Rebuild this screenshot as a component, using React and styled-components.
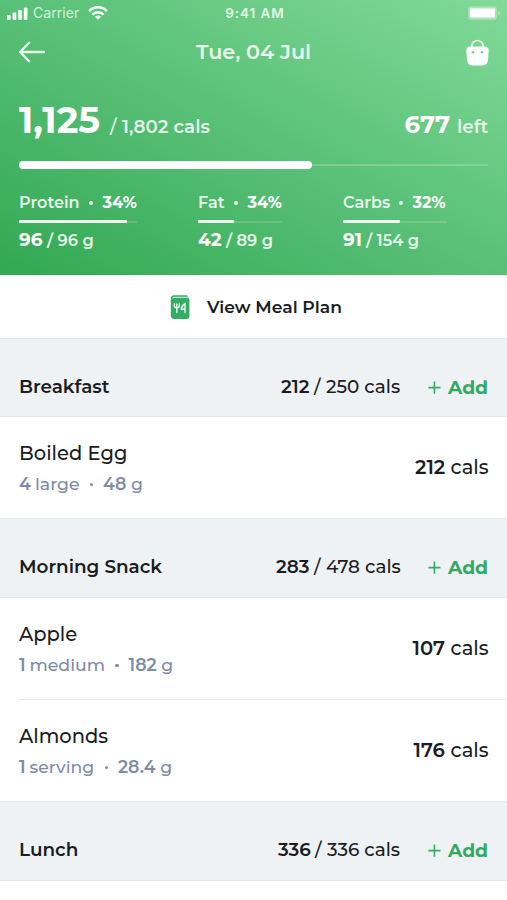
import React from "react";
import styled, { createGlobalStyle } from "styled-components";

const GlobalStyle = createGlobalStyle`
  *, *::before, *::after { box-sizing: border-box; }
  body {
    margin: 0;
    background: #fff;
    font-family: Montserrat, Inter, sans-serif;
    color: #1b1c1f;
  }
`;

const Screen = styled.main`
  width: 507px;
  height: 900px;
  overflow: hidden;
  background: #fff;
`;

const Header = styled.header`
  height: 275px;
  color: #f1fdf4;
  background: linear-gradient(to top right, #32a853, #59c077 50%, #82da98);
`;

const StatusBar = styled.div`
  display: grid;
  grid-template-columns: 1fr auto 1fr;
  align-items: center;
  height: 26px;
  padding: 0 6px 0 7px;
`;

const StatusGroup = styled.div`
  display: flex;
  align-items: center;
  justify-content: ${(p) => (p.$end ? "flex-end" : "flex-start")};
`;

const Carrier = styled.span`
  margin: 0 9px 0 5px;
  font: 400 14px/26px Inter, sans-serif;
  letter-spacing: 0.06px;
  color: #d5f3dc;
`;

const Clock = styled.time`
  padding-left: 2px;
  font: 600 13.5px/26px Inter, sans-serif;
  letter-spacing: 0.95px;
  color: #e2f8e7;
`;

const NavBar = styled.nav`
  display: grid;
  grid-template-columns: 27px 1fr 27px;
  align-items: center;
  height: 52px;
  padding: 0 18px;
`;

const IconButton = styled.button`
  display: flex;
  justify-content: ${(p) => (p.$end ? "flex-end" : "flex-start")};
  padding: 0;
  border: 0;
  background: none;
  color: inherit;
`;

const Title = styled.h1`
  margin: 0;
  font-size: 20.8px;
  font-weight: 600;
  line-height: 30px;
  text-align: center;
  color: #e8faec;
`;

const Run = styled.span`
  flex: none;
  width: ${(p) => (p.$w ? `${p.$w}px` : "auto")};
  margin-left: ${(p) => (p.$push ? "auto" : 0)};
  font-size: ${(p) => p.$size}px;
  font-weight: ${(p) => p.$weight || 500};
  color: ${(p) => (p.$strong ? "#fff" : "inherit")};
  white-space: nowrap;
`;

const Line = styled.div`
  display: flex;
  align-items: baseline;
  line-height: ${(p) => p.$height}px;
  height: ${(p) => p.$height}px;
`;

const Summary = styled.section`
  padding: 20px 19px 0;
  color: #e4f9e9;
`;

const Progress = styled.div`
  display: flex;
  align-items: center;
  height: 8px;
  margin-top: 19px;
`;

const ProgressFill = styled.div`
  width: 293px;
  height: 8px;
  border-radius: 4px;
  background: #fff;
`;

const ProgressRest = styled.div`
  flex: 1;
  height: 2px;
  background: rgba(255, 255, 255, 0.2);
`;

const Macros = styled.div`
  display: flex;
  gap: 61px;
  margin-top: 23px;
`;

const Macro = styled.div`
  width: ${(p) => p.$w}px;
`;

const MacroTrack = styled.div`
  display: flex;
  align-items: center;
  height: 3px;
  margin: 8px 0 5px;
`;

const MacroFill = styled.div`
  width: ${(p) => p.$w}px;
  height: 3px;
  border-radius: 1px;
  background: #ecfdf0;
`;

const MacroRest = styled.div`
  flex: 1;
  height: 2px;
  background: rgba(255, 255, 255, 0.14);
`;

const Dot = styled.i`
  flex: none;
  align-self: center;
  width: ${(p) => p.$size}px;
  height: ${(p) => p.$size}px;
  margin-top: 1px;
  margin-right: ${(p) => p.$gap}px;
  border-radius: 50%;
  background: currentColor;
`;

const MealPlanButton = styled.button`
  display: flex;
  align-items: center;
  justify-content: center;
  gap: 17px;
  width: 100%;
  height: 63px;
  padding: 0 0 0 5px;
  border: 0;
  background: #fff;
  color: inherit;
  font: 600 17.2px/24px Montserrat, Inter, sans-serif;
`;

const MealHeader = styled.header`
  display: flex;
  align-items: flex-start;
  height: ${(p) => (p.$first ? 79 : 80)}px;
  padding: 36px 19px 0;
  border: solid #e3e8eb;
  border-width: 1px 0;
  background: #eef2f5;
`;

const MealName = styled.h2`
  flex: 1;
  margin: 0;
  font-size: 18.4px;
  font-weight: 600;
  line-height: 24px;
`;

const AddButton = styled.button`
  display: flex;
  align-items: center;
  gap: 7px;
  width: 60px;
  height: 24px;
  margin: 1px 0 0 28px;
  padding: 0;
  border: 0;
  background: none;
  color: #34a964;
  font: 700 18.7px/24px Montserrat, Inter, sans-serif;
`;

const Food = styled.div`
  display: flex;
  align-items: center;
  justify-content: space-between;
  height: ${(p) => (p.$divided ? 102 : 101)}px;
  margin-left: 19px;
  padding-right: 18px;
  border-bottom: ${(p) => (p.$divided ? "1px solid #e6eaec" : "0")};
`;

const FoodText = styled.div`
  display: flex;
  flex-direction: column;
  gap: 7px;
`;

const FoodDetail = styled(Line)`
  color: #808ba6;
`;

const FoodCals = styled(Line)`
  margin-bottom: 1px;
`;

const SignalIcon = () => (
  <svg width="21" height="13" viewBox="0 0 21 13" fill="#f4fff6">
    <rect x="0" y="8" width="3.7" height="5" rx="1" />
    <rect x="5.6" y="5.5" width="3.7" height="7.5" rx="1" />
    <rect x="11.2" y="3" width="3.7" height="10" rx="1" />
    <rect x="16.8" y="0.6" width="3.7" height="12.4" rx="1" />
  </svg>
);

const WifiIcon = () => (
  <svg width="20" height="14" viewBox="0 0 20 14" fill="none" stroke="#f6fff8" strokeWidth="2.5">
    <path d="M1.1 5.1C6.2 0.1 13.8 0.1 18.9 5.1" />
    <path d="M4.4 8.5C7.6 5.4 12.4 5.4 15.6 8.5" />
    <path d="M10 13.8 6.9 10.7Q10 8.1 13.1 10.7Z" fill="#f6fff8" stroke="none" />
  </svg>
);

const BatteryIcon = () => (
  <svg width="33" height="14" viewBox="0 0 33 14">
    <rect x="0" y="0.3" width="29" height="13.4" rx="3" fill="#fff" fillOpacity="0.33" />
    <rect x="2" y="2.4" width="25" height="9.2" rx="1" fill="#fff" />
    <path d="M30.4 5v4c1.3-.5 2-1.1 2-2s-.7-1.5-2-2Z" fill="#fff" fillOpacity="0.35" />
  </svg>
);

const BackIcon = () => (
  <svg width="27" height="22" viewBox="0 0 27 22" fill="none" stroke="#e4f9e8" strokeWidth="2.4" strokeLinecap="round" strokeLinejoin="round">
    <path d="M26 11H2.2M11 1.7 2.2 11l8.8 9.3" />
  </svg>
);

const BagIcon = () => (
  <svg width="23" height="27" viewBox="0 0 23 27">
    <path d="M5.8 9V7.2a5.7 5.7 0 0 1 11.4 0V9" fill="none" stroke="#e5faea" strokeWidth="1.7" />
    <path d="M4.6 7.6h13.8c3.2 0 4.5 1.7 4.3 4.4l-.7 8.7c-.4 4-2.2 5.7-5.9 5.7H6.9c-3.7 0-5.500-1.700-5.900-5.700L.3 12C.1 9.300 1.400 7.600 4.600 7.600Z" fill="#fff" />
    <circle cx="6.9" cy="13.2" r="1.3" fill="#7ccd90" />
    <circle cx="16" cy="13.2" r="1.3" fill="#7ccd90" />
  </svg>
);

const MealPlanIcon = () => (
  <svg width="20" height="26" viewBox="0 0 20 26">
    <path d="M.8 5C.8 2.6 2 1.3 4.2 1.3H16.5c.7 0 1 .4 1 1v1.5c1.3 0 1.9.6 1.9 1.9V22.5c0 1.6-.8 2.4-2.4 2.400H4.200C2 24.900.8 23.700.8 21.500Z" fill="#35ac63" />
    <path d="M17.5 3.300H4.300C3.300 3.300 2.600 3.700 2.200 4.400" fill="none" stroke="#d9f3e1" strokeWidth="1" />
    <g fill="none" stroke="#e6f8eb" strokeWidth="1.4" strokeLinecap="round">
      <path d="M4.300 10V11.500c0 1.500.9 2.200 2.500 2.400 1.600-.2 2.500-.9 2.500-2.400V10M6.800 10V18.500" />
      <path d="M15 18.500V9.700C12.900 11 11.500 12.800 11.300 15.200H15" />
    </g>
  </svg>
);

const PlusIcon = () => (
  <svg width="13" height="14" viewBox="0 0 13 14" fill="none" stroke="currentColor" strokeWidth="1.6">
    <path d="M6.5 .5v12.200M.4 6.600H12.600" />
  </svg>
);

const macros = [
  { name: "Protein", nameW: 70, pct: "34%", width: 118, fill: 108, value: "96", valueW: 28, total: "96 g" },
  { name: "Fat", nameW: 36, pct: "34%", width: 84, fill: 36, value: "42", valueW: 28, total: "89 g" },
  { name: "Carbs", nameW: 56, pct: "32%", width: 104, fill: 57, value: "91", valueW: 23, total: "154 g" },
];

const meals = [
  {
    name: "Breakfast", eaten: "212", eatenW: 33, goal: "250", goalW: 74,
    foods: [{ name: "Boiled Egg", qty: "4", qtyW: 16, unit: "large", unitW: 54.5, weight: "48", cals: "212", calsW: 35.5 }],
  },
  {
    name: "Morning Snack", eaten: "283", eatenW: 38, goal: "478", goalW: 74,
    foods: [
      { name: "Apple", qty: "1", qtyW: 10.5, unit: "medium", unitW: 85.5, weight: "182", cals: "107", calsW: 38 },
      { name: "Almonds", qty: "1", qtyW: 10.5, unit: "serving", unitW: 75, weight: "28.4", cals: "176", calsW: 37 },
    ],
  },
  { name: "Lunch", eaten: "336", eatenW: 37, goal: "336", goalW: 73, foods: [] },
];

function MacroColumn({ m }) {
  return (
    <Macro $w={m.width}>
      <Line $height={20}>
        <Run $size={16.1} $weight={600} $w={m.nameW}>{m.name}</Run>
        <Dot $size={4} $gap={9.5} />
        <Run $size={16.1} $weight={700} $strong>{m.pct}</Run>
      </Line>
      <MacroTrack>
        <MacroFill $w={m.fill} />
        <MacroRest />
      </MacroTrack>
      <Line $height={24}>
        <Run $size={18.4} $weight={700} $w={m.valueW} $strong>{m.value}</Run>
        <Run $size={16.3} $weight={600} $w={10.5}>/</Run>
        <Run $size={16.3} $weight={600}>{m.total}</Run>
      </Line>
    </Macro>
  );
}

function FoodRow({ food, divided }) {
  return (
    <Food $divided={divided}>
      <FoodText>
        <Line $height={26}>
          <Run $size={19.5}>{food.name}</Run>
        </Line>
        <FoodDetail $height={22}>
          <Run $size={17.4} $weight={600} $w={food.qtyW}>{food.qty}</Run>
          <Run $size={17.3} $w={food.unitW}>{food.unit}</Run>
          <Dot $size={3.5} $gap={10} />
          <Run $size={17.4} $weight={600}>{food.weight}</Run>
          <Run $size={17.3}>&nbsp;g</Run>
        </FoodDetail>
      </FoodText>
      <FoodCals $height={26}>
        <Run $size={19.6} $weight={600} $w={food.calsW}>{food.cals}</Run>
        <Run $size={19.5} $w={38.5}>cals</Run>
      </FoodCals>
    </Food>
  );
}

export default function App() {
  return (
    <Screen>
      <GlobalStyle />
      <Header>
        <StatusBar>
          <StatusGroup>
            <SignalIcon />
            <Carrier>Carrier</Carrier>
            <WifiIcon />
          </StatusGroup>
          <Clock>9:41 AM</Clock>
          <StatusGroup $end>
            <BatteryIcon />
          </StatusGroup>
        </StatusBar>
        <NavBar>
          <IconButton aria-label="Back"><BackIcon /></IconButton>
          <Title>Tue, 04 Jul</Title>
          <IconButton aria-label="Bag" $end><BagIcon /></IconButton>
        </NavBar>
        <Summary>
          <Line $height={44}>
            <Run $size={36.6} $weight={700} $w={91} $strong>1,125</Run>
            <Run $size={18.4} $w={12}>/</Run>
            <Run $size={18.3} $weight={600}>1,802 cals</Run>
            <Run $size={24.4} $weight={700} $w={52.5} $push $strong>677</Run>
            <Run $size={18.4} $weight={600} $w={31}>left</Run>
          </Line>
          <Progress>
            <ProgressFill />
            <ProgressRest />
          </Progress>
          <Macros>
            {macros.map((m) => <MacroColumn key={m.name} m={m} />)}
          </Macros>
        </Summary>
      </Header>
      <MealPlanButton>
        <MealPlanIcon />
        View Meal Plan
      </MealPlanButton>
      {meals.map((meal, i) => (
        <section key={meal.name}>
          <MealHeader $first={i === 0}>
            <MealName>{meal.name}</MealName>
            <Line $height={24}>
              <Run $size={18.4} $weight={600} $w={meal.eatenW}>{meal.eaten}</Run>
              <Run $size={18.4} $w={12}>/</Run>
              <Run $size={18.4} $w={meal.goalW}>{meal.goal} cals</Run>
            </Line>
            <AddButton><PlusIcon />Add</AddButton>
          </MealHeader>
          {meal.foods.map((food, j) => (
            <FoodRow key={food.name} food={food} divided={j < meal.foods.length - 1} />
          ))}
        </section>
      ))}
    </Screen>
  );
}
